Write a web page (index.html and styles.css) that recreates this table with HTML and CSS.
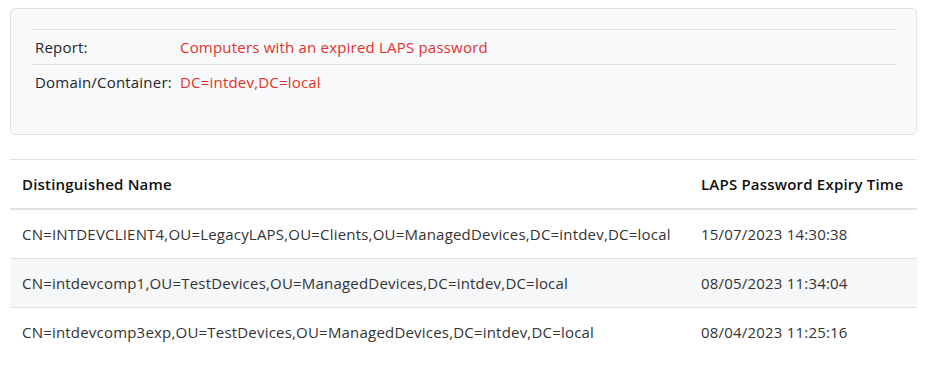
FILE: index.html
```html
<!DOCTYPE html>
<html>
<head>
<meta charset="utf-8">
<link rel="stylesheet" href="styles.css">
</head>
<body>
<div class="card">
  <table class="info">
    <tr><td class="lbl">Report:</td><td class="val">Computers with an expired LAPS password</td></tr>
    <tr><td class="lbl">Domain/Container:</td><td class="val">DC=intdev,DC=local</td></tr>
  </table>
</div>
<table class="data">
  <thead>
    <tr><th class="c1">Distinguished Name</th><th class="c2">LAPS Password Expiry Time</th></tr>
  </thead>
  <tbody>
    <tr><td>CN=INTDEVCLIENT4,OU=LegacyLAPS,OU=Clients,OU=ManagedDevices,DC=intdev,DC=local</td><td>15/07/2023 14:30:38</td></tr>
    <tr class="alt"><td>CN=intdevcomp1,OU=TestDevices,OU=ManagedDevices,DC=intdev,DC=local</td><td>08/05/2023 11:34:04</td></tr>
    <tr><td>CN=intdevcomp3exp,OU=TestDevices,OU=ManagedDevices,DC=intdev,DC=local</td><td>08/04/2023 11:25:16</td></tr>
  </tbody>
</table>
</body>
</html>
```

FILE: styles.css
```css
html, body {
  background: #fff;
}
body {
  margin: 8px 9px 0 10px;
  font-family: "Open Sans", "Noto Sans", sans-serif;
  font-size: 15px;
  letter-spacing: 0.2px;
  line-height: 24px;
  color: #212529;
}
.card {
  background: #f8f9fa;
  border: 1px solid #dee2e6;
  border-radius: 5px;
  padding: 20px 20px 35px 20px;
}
.info {
  width: 100%;
  border-collapse: collapse;
}
.info td {
  border-top: 1px solid #dee2e6;
  padding: 5px 4px;
  vertical-align: top;
}
.info .lbl {
  width: 137px;
  white-space: nowrap;
}
.val {
  color: #e4312b;
}
.data {
  width: 100%;
  border-collapse: collapse;
  margin-top: 24px;
  color: #333;
}
.data th, .data td {
  text-align: left;
  padding: 12px;
  border-top: 1px solid #dee2e6;
  white-space: nowrap;
}
.data th {
  font-weight: 600;
  color: #111;
  border-bottom: 2px solid #dee2e6;
}
.data .c1 {
  width: 655px;
}
.alt td {
  background: #f6f7f9;
}
```
